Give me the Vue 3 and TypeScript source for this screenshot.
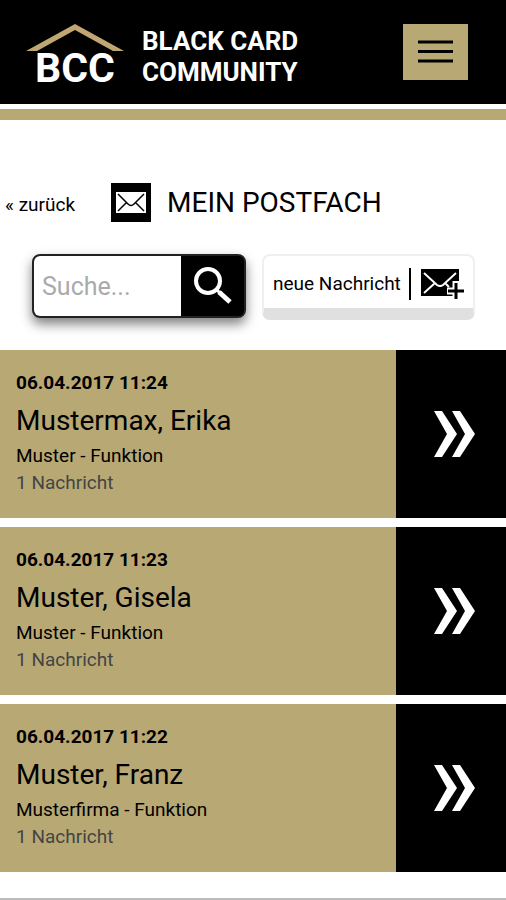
<script setup lang="ts">
import { ref } from 'vue'

interface Thread {
  date: string
  name: string
  role: string
  count: string
}

const query = ref('')

const threads: Thread[] = [
  { date: '06.04.2017 11:24', name: 'Mustermax, Erika', role: 'Muster - Funktion', count: '1 Nachricht' },
  { date: '06.04.2017 11:23', name: 'Muster, Gisela', role: 'Muster - Funktion', count: '1 Nachricht' },
  { date: '06.04.2017 11:22', name: 'Muster, Franz', role: 'Musterfirma - Funktion', count: '1 Nachricht' },
]
</script>

<template>
  <div class="page">
    <header class="header">
      <a class="brand" href="#">
        <span class="logo">
          <svg class="roof" viewBox="0 0 98 27" aria-hidden="true">
            <path d="M0 27L49 0L98 27H87L49 6L11 27Z" fill="#bfa672" />
          </svg>
          <span class="initials">BCC</span>
        </span>
        <span class="title">BLACK CARD<br />COMMUNITY</span>
      </a>
      <button class="menu" type="button" aria-label="Menü">
        <svg width="35" height="24" viewBox="0 0 35 24" aria-hidden="true">
          <path d="M0 2H35M0 11.500H35M0 21H35" stroke="#000" stroke-width="3" />
        </svg>
      </button>
    </header>
    <div class="stripe"></div>

    <main>
      <div class="heading">
        <a class="back" href="#">« zurück</a>
        <svg class="mail" width="40" height="39" viewBox="0 0 40 39" aria-hidden="true">
          <rect width="40" height="39" fill="#000" />
          <rect x="5" y="9" width="30" height="21" fill="#fff" />
          <path d="M7 11L17 21Q20 24 23 21L33 11M7 28L15 20M33 28L25 20" fill="none" stroke="#000" stroke-width="1.5" />
        </svg>
        <h1>MEIN POSTFACH</h1>
      </div>

      <div class="tools">
        <form class="search" role="search" @submit.prevent>
          <input v-model="query" type="text" placeholder="Suche..." aria-label="Suche" />
          <button type="submit" aria-label="Suchen">
            <svg width="38" height="38" viewBox="0 0 38 38" aria-hidden="true">
              <circle cx="14" cy="14" r="12" fill="none" stroke="#fff" stroke-width="4" />
              <path d="M23 23L26 26" stroke="#fff" stroke-width="3" />
              <path d="M25 25L36 35" stroke="#fff" stroke-width="5" />
            </svg>
          </button>
        </form>
        <button class="compose" type="button">
          <span class="compose-label">neue Nachricht</span>
          <svg width="43" height="30" viewBox="0 0 43 30" aria-hidden="true">
            <rect width="38" height="27" fill="#000" />
            <path d="M3 4L16 16Q19 18 22 16L35 4M3 24L14 14M24 14L28 18" fill="none" stroke="#fff" stroke-width="2" />
            <path d="M35 12V30M26 22H43" stroke="#fff" stroke-width="7" />
            <path d="M35 14V30M27 22H43" stroke="#000" stroke-width="3" />
          </svg>
        </button>
      </div>

      <ul class="threads">
        <li v-for="thread in threads" :key="thread.name">
          <a class="thread" href="#">
            <span class="info">
              <strong class="date">{{ thread.date }}</strong>
              <span class="name">{{ thread.name }}</span>
              <span class="role">{{ thread.role }}</span>
              <span class="count">{{ thread.count }}</span>
            </span>
            <span class="open">
              <svg width="42" height="46" viewBox="0 0 42 46" aria-hidden="true">
                <path d="M0 0H8L23 23L8 46H0L13 23ZM18 0H26L41 23L26 46H18L31 23Z" fill="#fff" />
              </svg>
            </span>
          </a>
        </li>
      </ul>
    </main>
    <footer class="footer"></footer>
  </div>
</template>

<style>
body {
  background: #fff;
}
</style>

<style scoped>
.page {
  font-family: Roboto, sans-serif;
  color: #000;
}

.page * {
  box-sizing: border-box;
}

a {
  color: inherit;
  text-decoration: none;
}

button {
  font: inherit;
  color: inherit;
  border: 0;
  padding: 0;
  cursor: pointer;
}

svg {
  display: block;
  flex: none;
}

.header {
  display: flex;
  justify-content: space-between;
  align-items: flex-start;
  padding: 24px 38px 16px 26px;
  background: #000;
}

.brand {
  display: flex;
  gap: 18px;
  color: #fff;
  font-weight: 700;
}

.logo {
  display: flex;
  flex-direction: column;
  align-items: center;
}

.roof {
  width: 98px;
  height: 27px;
}

.initials {
  font-size: 41px;
  line-height: 34px;
}

.title {
  font-size: 26px;
  line-height: 31px;
  padding-top: 2px;
}

.menu {
  display: flex;
  align-items: center;
  justify-content: center;
  width: 65px;
  height: 56px;
  background: #b8a974;
}

.stripe {
  height: 16px;
  border-top: 5px solid #fff;
  background: #b8a974;
}

.heading {
  display: flex;
  align-items: center;
  padding: 63px 5px 0;
}

.back {
  font-size: 19px;
  line-height: 24px;
  padding-top: 4px;
}

.mail {
  margin-left: 36px;
}

h1 {
  margin: 0 0 0 16px;
  font-size: 28px;
  line-height: 36px;
  font-weight: 400;
}

.tools {
  display: flex;
  gap: 16px;
  padding: 32px 31px 30px 32px;
}

.search {
  display: flex;
  width: 214px;
  height: 64px;
  border: 2px solid #222;
  border-radius: 8px;
  background: #000;
  box-shadow: 0 6px 12px rgba(0, 0, 0, 0.5);
}

.search input {
  flex: 1;
  min-width: 0;
  padding: 0 8px;
  border: 0;
  border-radius: 6px 0 0 6px;
  outline: 0;
  background: #fff;
  font: inherit;
  font-size: 25px;
}

.search input::placeholder {
  color: #aaa;
  opacity: 1;
}

.search button {
  display: flex;
  align-items: center;
  justify-content: center;
  width: 63px;
  border-radius: 0 6px 6px 0;
  background: #000;
}

.compose {
  display: flex;
  flex: 1;
  align-items: center;
  justify-content: space-between;
  height: 66px;
  padding: 4px 9px 0;
  border: 2px solid #efefef;
  border-bottom: 12px solid #e0e0e0;
  border-radius: 8px;
  background: #fff;
}

.compose-label {
  padding-right: 8px;
  border-right: 2px solid #000;
  font-size: 19px;
  line-height: 32px;
  white-space: nowrap;
}

.threads {
  display: grid;
  gap: 9px;
  margin: 0;
  padding: 0;
  list-style: none;
}

.thread {
  display: flex;
  background: #b8a974;
}

.info {
  display: flex;
  flex: 1;
  flex-direction: column;
  padding: 19px 16px 22px;
  font-size: 19px;
  line-height: 27px;
}

.name {
  padding-top: 4px;
  font-size: 28px;
  line-height: 42px;
}

.count {
  color: #444;
}

.open {
  display: flex;
  align-items: center;
  justify-content: center;
  width: 110px;
  padding-left: 8px;
  background: #000;
}

.footer {
  margin-top: 26px;
  border-top: 2px solid #bbb;
}
</style>
